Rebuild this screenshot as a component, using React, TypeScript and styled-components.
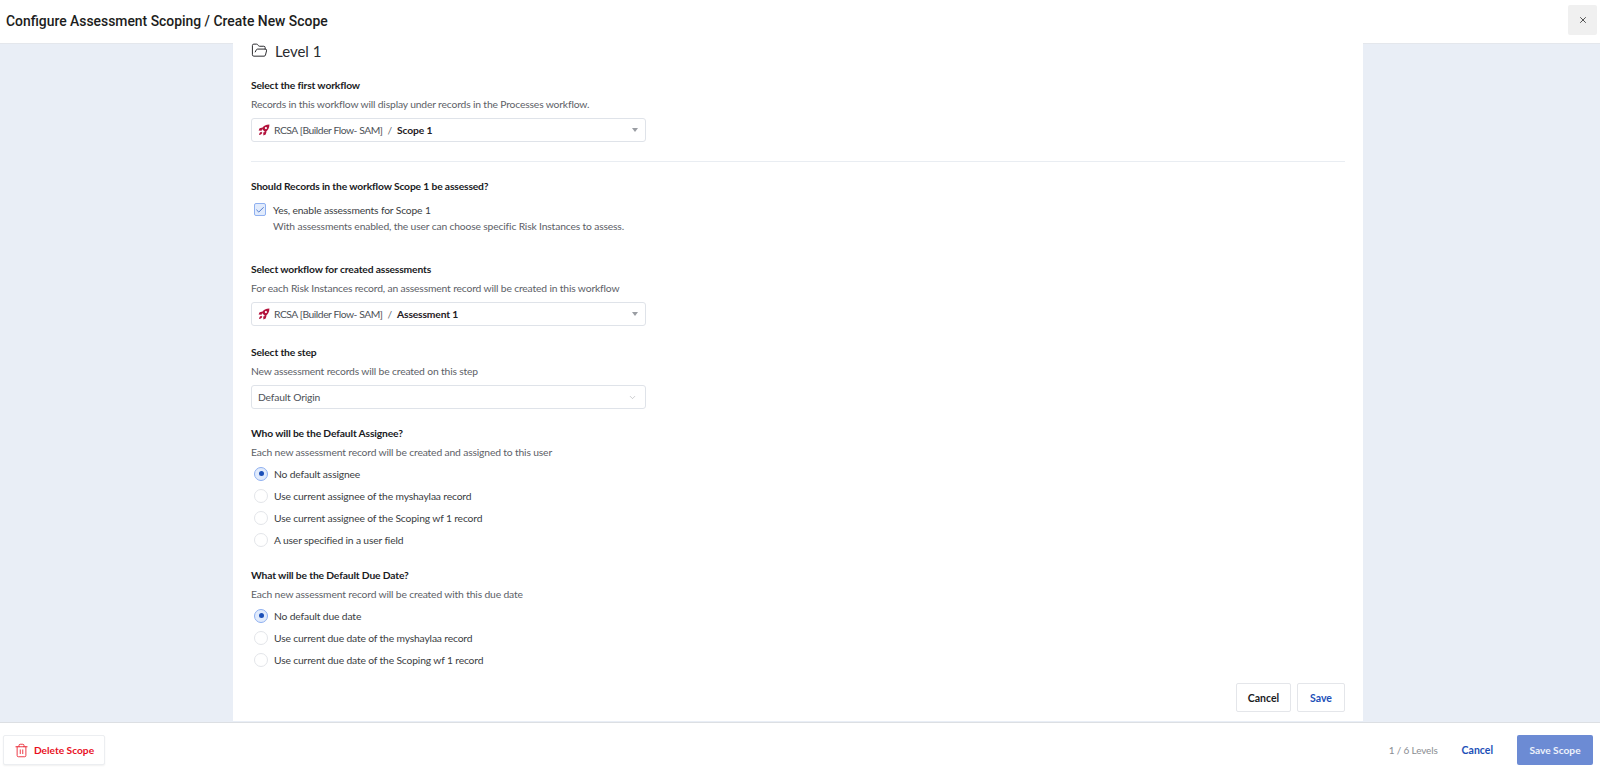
import styled, { createGlobalStyle } from 'styled-components';
import { FolderOpen, Trash2, X, ChevronDown, Check } from 'lucide-react';

const assigneeOptions = [
  'No default assignee',
  'Use current assignee of the myshaylaa record',
  'Use current assignee of the Scoping wf 1 record',
  'A user specified in a user field',
];

const dueDateOptions = [
  'No default due date',
  'Use current due date of the myshaylaa record',
  'Use current due date of the Scoping wf 1 record',
];

function RocketIcon() {
  return (
    <RocketSvg width="12" height="12" viewBox="0 0 12 12" aria-hidden="true">
      <path d="M11.4.6C8 .6 5.4 2 3.700 4.700L7.300 8.300C10 6.600 11.400 4 11.400.6z" fill="#b3123c" />
      <path d="M4.600 3.400 1.600 4.300.6 6.600 3.600 6.800zM8.600 7.400 7.700 10.400 5.400 11.400 5.200 8.400z" fill="#b3123c" />
      <path d="M3.200 7.700C2 8 1.300 9.200 1 11 2.800 10.700 4 10 4.300 8.800z" fill="#b3123c" />
      <circle cx="7.900" cy="4.100" r="1.100" fill="#fff" />
    </RocketSvg>
  );
}

function WorkflowSelect({ name }: { name: string }) {
  return (
    <SelectBox>
      <RocketIcon />
      <WorkflowPath>RCSA [Builder Flow- SAM]</WorkflowPath>
      <SelectSlash>/</SelectSlash>
      <SelectName>{name}</SelectName>
      <Caret />
    </SelectBox>
  );
}

function RadioGroup({ options }: { options: string[] }) {
  return (
    <RadioList>
      {options.map((option, index) => (
        <RadioRow key={option}>
          <RadioCircle $checked={index === 0} />
          {option}
        </RadioRow>
      ))}
    </RadioList>
  );
}

export default function App() {
  return (
    <>
      <GlobalStyle />
      <Page>
        <Header>
          <Title>Configure Assessment Scoping / Create New Scope</Title>
          <CloseButton>
            <X size={10} strokeWidth={2} />
          </CloseButton>
        </Header>
        <Main>
          <Panel>
            <LevelHeading>
              <FolderOpen size={17} strokeWidth={1.4} />
              Level 1
            </LevelHeading>

            <Section $top={19}>
              <Label>Select the first workflow</Label>
              <Help>Records in this workflow will display under records in the Processes workflow.</Help>
              <WorkflowSelect name="Scope 1" />
            </Section>

            <Divider />

            <Label>Should Records in the workflow Scope 1 be assessed?</Label>
            <CheckRow>
              <CheckBox>
                <Check size={10} strokeWidth={1.8} />
              </CheckBox>
              <div>
                <CheckLabel>Yes, enable assessments for Scope 1</CheckLabel>
                <Help>With assessments enabled, the user can choose specific Risk Instances to assess.</Help>
              </div>
            </CheckRow>

            <Section $top={26}>
              <Label>Select workflow for created assessments</Label>
              <Help>For each Risk Instances record, an assessment record will be created in this workflow</Help>
              <WorkflowSelect name="Assessment 1" />
            </Section>

            <Section $top={18}>
              <Label>Select the step</Label>
              <Help>New assessment records will be created on this step</Help>
              <SelectBox>
                <SelectPath>Default Origin</SelectPath>
                <SelectChevron>
                  <ChevronDown size={9} strokeWidth={1.5} />
                </SelectChevron>
              </SelectBox>
            </Section>

            <Section $top={16}>
              <Label>Who will be the Default Assignee?</Label>
              <Help>Each new assessment record will be created and assigned to this user</Help>
              <RadioGroup options={assigneeOptions} />
            </Section>

            <Section $top={20}>
              <Label>What will be the Default Due Date?</Label>
              <Help>Each new assessment record will be created with this due date</Help>
              <RadioGroup options={dueDateOptions} />
            </Section>

            <PanelActions>
              <PlainButton>Cancel</PlainButton>
              <PlainButton $blue $width={48}>
                Save
              </PlainButton>
            </PanelActions>
          </Panel>
        </Main>
        <Footer>
          <DeleteButton>
            <Trash2 size={15} strokeWidth={1.3} />
            Delete Scope
          </DeleteButton>
          <FooterRight>
            <LevelCount>1 / 6 Levels</LevelCount>
            <FooterCancel>Cancel</FooterCancel>
            <SaveScope>Save Scope</SaveScope>
          </FooterRight>
        </Footer>
      </Page>
    </>
  );
}

const GlobalStyle = createGlobalStyle`
  html, body {
    margin: 0;
    padding: 0;
    background: #fff;
  }
  * {
    box-sizing: border-box;
  }
  body {
    font-family: "Lato", "Liberation Sans", sans-serif;
    color: #1f2024;
  }
`;

const Page = styled.div`
  display: flex;
  flex-direction: column;
  width: 1600px;
  height: 777px;
  overflow: hidden;
`;

const Header = styled.header`
  display: flex;
  align-items: center;
  justify-content: space-between;
  flex: 0 0 44px;
  padding: 0 3px 2px 6px;
  border-bottom: 1px solid #e4e7ec;
`;

const Title = styled.h1`
  margin: 0;
  font-family: "Roboto", sans-serif;
  font-size: 13.9px;
  font-weight: 500;
  color: #1c1d20;
`;

const CloseButton = styled.button`
  display: flex;
  align-items: center;
  justify-content: center;
  align-self: flex-start;
  width: 29px;
  height: 30px;
  margin-top: 5px;
  padding: 0;
  border: 0;
  border-radius: 2px;
  background: #f0f0f0;
  color: #333;
`;

const Main = styled.main`
  flex: 1;
  min-height: 0;
  padding-left: 233px;
  background: #e9eef6;
`;

const Panel = styled.div`
  width: 1130px;
  height: 100%;
  padding: 0 18px;
  background: #fff;
`;

const LevelHeading = styled.div`
  display: flex;
  align-items: center;
  gap: 7px;
  height: 15px;
  margin-top: -1px;
  font-size: 15px;
  color: #2a2b2f;
`;

const Section = styled.section<{ $top: number }>`
  margin-top: ${({ $top }) => $top}px;
`;

const Label = styled.div`
  height: 18px;
  font-size: 10.3px;
  font-weight: 700;
  line-height: 17px;
  letter-spacing: -0.15px;
  color: #1a1b1e;
`;

const Help = styled.div`
  height: 18px;
  font-size: 10.3px;
  line-height: 18px;
  letter-spacing: -0.15px;
  color: #5d6167;
`;

const SelectBox = styled.div`
  display: flex;
  align-items: center;
  position: relative;
  width: 395px;
  height: 24px;
  margin-top: 5px;
  padding: 0 6px;
  border: 1px solid #dfe3e9;
  border-radius: 3px;
  font-size: 10.3px;
  letter-spacing: -0.15px;
`;

const RocketSvg = styled.svg`
  flex: none;
  margin-right: 4px;
`;

const SelectPath = styled.span`
  color: #4d5157;
`;

const WorkflowPath = styled(SelectPath)`
  letter-spacing: -0.45px;
`;

const SelectSlash = styled.span`
  margin: 0 5px;
  color: #6a6e74;
`;

const SelectName = styled.span`
  font-weight: 700;
  color: #1f2024;
`;

const Caret = styled.span`
  position: absolute;
  right: 7px;
  top: 9px;
  border-style: solid;
  border-width: 4px 3.5px 0;
  border-color: #9a9da3 transparent transparent;
`;

const SelectChevron = styled.span`
  display: flex;
  margin-left: auto;
  margin-right: 2px;
  color: #a5a8ad;
`;

const Divider = styled.hr`
  height: 1px;
  margin: 19px 0 16px;
  border: 0;
  background: #e9edf2;
`;

const CheckRow = styled.div`
  display: flex;
  gap: 7px;
  margin-top: 5px;
  padding-left: 3px;
`;

const CheckBox = styled.span`
  display: flex;
  align-items: center;
  justify-content: center;
  flex: 0 0 12px;
  width: 12px;
  height: 13px;
  margin-top: 2px;
  border: 1px solid #8fb0f0;
  border-radius: 2px;
  background: #e1ebfc;
  color: #1c50b8;
`;

const CheckLabel = styled.div`
  height: 16px;
  font-size: 10.3px;
  line-height: 18px;
  letter-spacing: -0.15px;
  color: #3a3d42;
`;

const RadioList = styled.div`
  display: flex;
  flex-direction: column;
  gap: 7px;
  margin-top: 5px;
`;

const RadioRow = styled.label`
  display: flex;
  align-items: center;
  gap: 6px;
  height: 15px;
  padding-left: 3px;
  font-size: 10.3px;
  letter-spacing: -0.15px;
  color: #3a3d42;
`;

const RadioCircle = styled.span<{ $checked: boolean }>`
  display: flex;
  align-items: center;
  justify-content: center;
  width: 14px;
  height: 14px;
  border: 1px solid ${({ $checked }) => ($checked ? '#8fb0f0' : '#e3e5e9')};
  border-radius: 50%;
  background: ${({ $checked }) => ($checked ? '#e1ebfc' : '#fff')};

  &::after {
    content: '';
    display: ${({ $checked }) => ($checked ? 'block' : 'none')};
    width: 5px;
    height: 5px;
    border-radius: 50%;
    background: #1c50b8;
  }
`;

const PanelActions = styled.div`
  display: flex;
  justify-content: flex-end;
  gap: 6px;
  margin-top: 16px;
`;

const PlainButton = styled.button<{ $blue?: boolean; $width?: number }>`
  width: ${({ $width }) => $width ?? 55}px;
  height: 29px;
  padding: 0;
  border: 1px solid #e4e6ea;
  border-radius: 2px;
  background: #fff;
  font-family: inherit;
  font-size: 10.5px;
  font-weight: 700;
  color: ${({ $blue }) => ($blue ? '#1c50b8' : '#1a1b1e')};
`;

const Footer = styled.footer`
  display: flex;
  align-items: center;
  justify-content: space-between;
  flex: 0 0 55px;
  padding: 0 7px 0 3px;
  border-top: 1px solid #dcdfe3;
`;

const DeleteButton = styled.button`
  display: flex;
  align-items: center;
  justify-content: center;
  gap: 5px;
  width: 102px;
  height: 30px;
  padding: 0;
  border: 1px solid #eceef1;
  border-radius: 2px;
  background: #fff;
  box-shadow: 0 1px 2px rgba(0, 0, 0, 0.06);
  font-family: inherit;
  font-size: 10.2px;
  font-weight: 700;
  color: #e8101e;
`;

const FooterRight = styled.div`
  display: flex;
  align-items: center;
`;

const LevelCount = styled.span`
  font-size: 10px;
  letter-spacing: -0.15px;
  color: #8a8d92;
`;

const FooterCancel = styled.button`
  margin: 0 24px;
  padding: 0;
  border: 0;
  background: none;
  font-family: inherit;
  font-size: 10.5px;
  font-weight: 700;
  color: #1c50b8;
`;

const SaveScope = styled.button`
  width: 76px;
  height: 30px;
  padding: 0;
  border: 0;
  border-radius: 2px;
  background: #6c8bd4;
  font-family: inherit;
  font-size: 10.2px;
  font-weight: 700;
  color: #eef2fb;
`;
